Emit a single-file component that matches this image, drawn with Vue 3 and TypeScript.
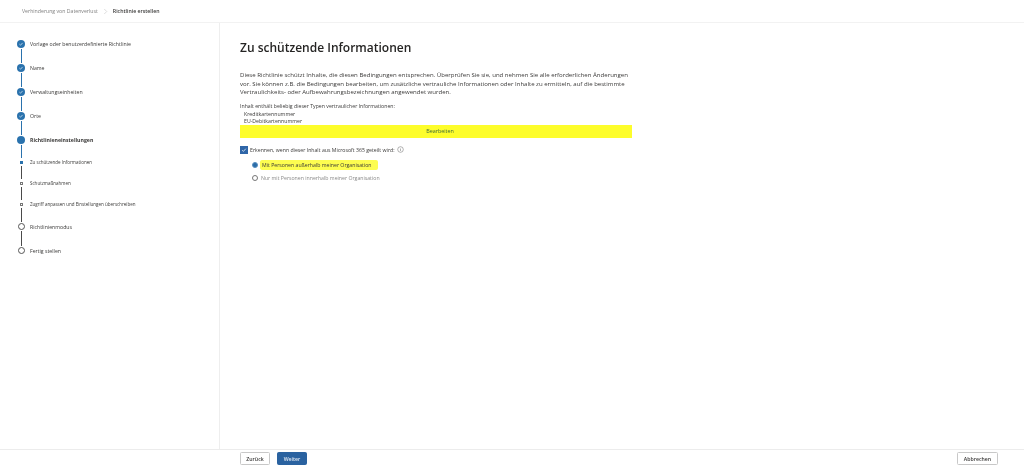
<script setup lang="ts">
interface Step {
  label: string
  kind: 'done' | 'current' | 'subcurrent' | 'sub' | 'todo'
  height: number
  line?: 'blue' | 'dark'
}
const steps: Step[] = [
  { label: 'Vorlage oder benutzerdefinierte Richtlinie', kind: 'done', height: 24, line: 'blue' },
  { label: 'Name', kind: 'done', height: 24, line: 'blue' },
  { label: 'Verwaltungseinheiten', kind: 'done', height: 24, line: 'blue' },
  { label: 'Orte', kind: 'done', height: 24, line: 'blue' },
  { label: 'Richtlinieneinstellungen', kind: 'current', height: 23, line: 'blue' },
  { label: 'Zu schützende Informationen', kind: 'subcurrent', height: 21, line: 'dark' },
  { label: 'Schutzmaßnahmen', kind: 'sub', height: 21, line: 'dark' },
  { label: 'Zugriff anpassen und Einstellungen überschreiben', kind: 'sub', height: 22, line: 'dark' },
  { label: 'Richtlinienmodus', kind: 'todo', height: 24, line: 'dark' },
  { label: 'Fertig stellen', kind: 'todo', height: 10 },
]
</script>

<template>
  <div class="page">
    <header class="crumbs">
      <span class="crumb">Verhinderung von Datenverlust</span>
      <svg class="chev" viewBox="0 0 6 8" width="5" height="7"><path d="M1.5 1l3 3-3 3" fill="none" stroke="#c4c4c4" stroke-width=".7" /></svg>
      <span class="crumb-now">Richtlinie erstellen</span>
    </header>
    <div class="middle">
      <aside class="side">
        <div v-for="s in steps" :key="s.label" class="step" :class="s.kind" :style="{ height: s.height + 'px' }">
          <div class="rail">
            <span class="dot">
              <svg v-if="s.kind === 'done'" viewBox="0 0 8 8" width="8" height="8"><path d="M2.4 4.1l1.1 1.1 2.1-2.3" fill="none" stroke="#e8f0f7" stroke-width=".7" /></svg>
            </span>
            <span v-if="s.line" class="line" :class="s.line"></span>
          </div>
          <span class="label">{{ s.label }}</span>
        </div>
      </aside>
      <main class="content">
        <h1>Zu schützende Informationen</h1>
        <p class="intro">Diese Richtlinie schützt Inhalte, die diesen Bedingungen entsprechen. Überprüfen Sie sie, und nehmen Sie alle erforderlichen Änderungen vor. Sie können z.B. die Bedingungen bearbeiten, um zusätzliche vertrauliche Informationen oder Inhalte zu ermitteln, auf die bestimmte Vertraulichkeits- oder Aufbewahrungsbezeichnungen angewendet wurden.</p>
        <div class="cond">
          <div>Inhalt enthält beliebig dieser Typen vertraulicher Informationen:</div>
          <div class="indent">Kreditkartennummer</div>
          <div class="indent">EU-Debitkartennummer</div>
        </div>
        <div class="edit">Bearbeiten</div>
        <div class="check-row">
          <span class="check"><svg viewBox="0 0 8 8" width="8" height="8"><path d="M2.2 4.2l1.2 1.2 2.4-2.7" fill="none" stroke="#e8f0f7" stroke-width=".8" /></svg></span>
          <span>Erkennen, wenn dieser Inhalt aus Microsoft 365 geteilt wird:</span>
          <svg class="info" viewBox="0 0 7 7" width="7" height="7"><circle cx="3.5" cy="3.5" r="2.8" fill="none" stroke="#666" stroke-width=".5" /><path d="M3.5 3v2M3.5 2v.5" stroke="#666" stroke-width=".5" /></svg>
        </div>
        <div class="radio-row r1">
          <span class="radio on"></span>
          <span class="mark">Mit Personen außerhalb meiner Organisation</span>
        </div>
        <div class="radio-row r2">
          <span class="radio"></span>
          <span class="muted">Nur mit Personen innerhalb meiner Organisation</span>
        </div>
      </main>
    </div>
    <footer class="foot">
      <div class="left-actions">
        <span class="btn">Zurück</span>
        <span class="btn primary">Weiter</span>
      </div>
      <span class="btn cancel">Abbrechen</span>
    </footer>
  </div>
</template>

<style>
html, body { margin: 0; background: #fff; }
</style>

<style scoped>
.page {
  width: 1024px;
  height: 467px;
  display: flex;
  flex-direction: column;
  overflow: hidden;
  background: #fff;
  color: #3a3938;
  font-family: "Open Sans", "Noto Sans", sans-serif;
  font-size: 5.2px;
  filter: blur(0.35px);
}
.crumbs {
  height: 23px;
  flex: none;
  box-sizing: border-box;
  border-bottom: 1px solid #f2f2f2;
  display: flex;
  align-items: center;
  padding-left: 22px;
  gap: 5px;
}
.crumb { color: #808080; font-size: 5.2px; }
.crumb-now { font-weight: 600; font-size: 5.2px; }
.middle { flex: 1; display: flex; min-height: 0; }
.side {
  width: 220px;
  flex: none;
  box-sizing: border-box;
  border-right: 1px solid #eeeeee;
  padding: 17px 0 0 17px;
}
.step { display: flex; gap: 5px; }
.rail { width: 8px; display: flex; flex-direction: column; align-items: center; flex: none; }
.dot {
  width: 8px;
  height: 8px;
  flex: none;
  border-radius: 50%;
  box-sizing: border-box;
  display: block;
}
.dot svg { display: block; }
.done .dot, .current .dot { background: #2a72ad; }
.current .label { font-weight: 700; }
.subcurrent .dot { width: 3px; height: 3px; margin: 2px 0 1px; background: #2a72ad; border-radius: 0; }
.sub .dot { width: 3px; height: 3px; margin: 2px 0 1px; border: .7px solid #777; border-radius: 0; }
.todo .dot { width: 7px; height: 7px; border: 1px solid #555; background: #fff; }
.line { width: 1px; flex: 1; margin: 1px 0; }
.line.blue { background: #2a72ad; }
.line.dark { background: #4a4a4a; }
.label { line-height: 8px; white-space: nowrap; }
.sub .label, .subcurrent .label { font-size: 4.5px; line-height: 7px; }
.content { flex: 1; box-sizing: border-box; padding: 16px 0 0 20px; }
h1 {
  margin: 0;
  font-size: 12px;
  line-height: 17px;
  font-weight: 600;
  color: #252423;
}
.intro {
  margin: 15px 0 0;
  width: 392px;
  line-height: 8.7px;
  font-size: 6.05px;
}
.cond { margin-top: 6px; line-height: 7.5px; font-size: 5.2px; }
.indent { padding-left: 4px; }
.edit {
  width: 392px;
  height: 13px;
  margin-top: -1px;
  box-sizing: border-box;
  padding-left: 8px;
  background: #fdfd2b;
  display: flex;
  align-items: center;
  justify-content: center;
  color: #3d6b3a;
  font-size: 5.4px;
}
.check-row { margin-top: 8px; display: flex; align-items: center; gap: 2px; height: 8px; }
.check { width: 8px; height: 8px; background: #2f66a8; display: block; }
.check svg { display: block; }
.radio-row { display: flex; align-items: center; gap: 3px; margin-left: 12px; height: 10px; }
.r1 { margin-top: 6px; }
.r2 { margin-top: 3px; }
.radio {
  width: 6px;
  height: 6px;
  box-sizing: border-box;
  border-radius: 50%;
  border: .7px solid #777;
  background: #fff;
  display: block;
}
.radio.on { background: #2a6ca8; border-color: #5a8fc0; }
.mark {
  background: #fdfd50;
  padding: 0 8px 0 2px;
  line-height: 10px;
  margin-left: -1px;
  width: 118px;
  box-sizing: border-box;
  white-space: nowrap;
  border-radius: 2px;
}
.muted { color: #8a8a8a; }
.foot {
  height: 18px;
  flex: none;
  box-sizing: border-box;
  border-top: 1px solid #ececec;
  display: flex;
  align-items: center;
  justify-content: space-between;
  padding: 0 26px 0 240px;
}
.left-actions { display: flex; gap: 7px; }
.btn {
  width: 30px;
  height: 13px;
  box-sizing: border-box;
  border: .7px solid #c8c8c8;
  border-radius: 1.5px;
  display: flex;
  align-items: center;
  justify-content: center;
  font-weight: 600;
  background: #fff;
}
.btn.primary { background: #2a62a0; border-color: #2a62a0; color: #dfe8f3; }
.btn.cancel { width: 41px; }
</style>
